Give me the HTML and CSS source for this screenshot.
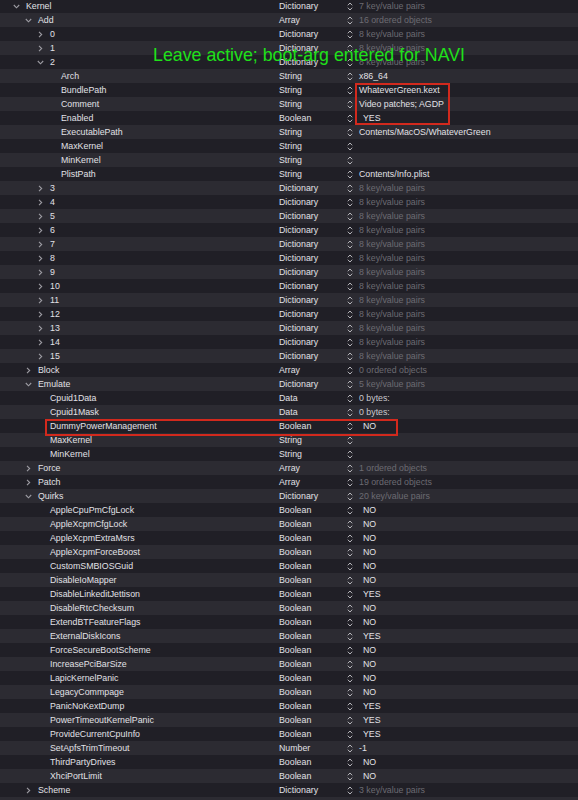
FILE: index.html
```html
<!DOCTYPE html>
<html>
<head>
<meta charset="utf-8">
<link rel="stylesheet" href="styles.css">
</head>
<body>
<div class="wrap">
  <div class="list">
    <div class="r"><div class="k l0"><span class="ch"><svg class="cd" width="7" height="5" viewBox="0 0 7 5"><path d="M0.8 1 L3.5 3.8 L6.2 1"/></svg></span>Kernel</div><div class="t">Dictionary</div><div class="s"><svg width="6" height="9" viewBox="0 0 6 9"><path d="M0.8 3.3 L3 1 L5.2 3.3 M0.8 5.7 L3 8 L5.2 5.7"/></svg></div><div class="v g">7 key/value pairs</div></div>
    <div class="r"><div class="k l1"><span class="ch"><svg class="cd" width="7" height="5" viewBox="0 0 7 5"><path d="M0.8 1 L3.5 3.8 L6.2 1"/></svg></span>Add</div><div class="t">Array</div><div class="s"><svg width="6" height="9" viewBox="0 0 6 9"><path d="M0.8 3.3 L3 1 L5.2 3.3 M0.8 5.7 L3 8 L5.2 5.7"/></svg></div><div class="v g">16 ordered objects</div></div>
    <div class="r"><div class="k l2"><span class="ch"><svg class="cr" width="7" height="7" viewBox="0 0 7 7"><path d="M2 0.8 L4.7 3.5 L2 6.2"/></svg></span>0</div><div class="t">Dictionary</div><div class="s"><svg width="6" height="9" viewBox="0 0 6 9"><path d="M0.8 3.3 L3 1 L5.2 3.3 M0.8 5.7 L3 8 L5.2 5.7"/></svg></div><div class="v g">8 key/value pairs</div></div>
    <div class="r"><div class="k l2"><span class="ch"><svg class="cr" width="7" height="7" viewBox="0 0 7 7"><path d="M2 0.8 L4.7 3.5 L2 6.2"/></svg></span>1</div><div class="t">Dictionary</div><div class="s"><svg width="6" height="9" viewBox="0 0 6 9"><path d="M0.8 3.3 L3 1 L5.2 3.3 M0.8 5.7 L3 8 L5.2 5.7"/></svg></div><div class="v g">8 key/value pairs</div></div>
    <div class="r"><div class="k l2"><span class="ch"><svg class="cd" width="7" height="5" viewBox="0 0 7 5"><path d="M0.8 1 L3.5 3.8 L6.2 1"/></svg></span>2</div><div class="t">Dictionary</div><div class="s"><svg width="6" height="9" viewBox="0 0 6 9"><path d="M0.8 3.3 L3 1 L5.2 3.3 M0.8 5.7 L3 8 L5.2 5.7"/></svg></div><div class="v g">8 key/value pairs</div></div>
    <div class="r"><div class="k l3">Arch</div><div class="t">String</div><div class="s"><svg width="6" height="9" viewBox="0 0 6 9"><path d="M0.8 3.3 L3 1 L5.2 3.3 M0.8 5.7 L3 8 L5.2 5.7"/></svg></div><div class="v">x86_64</div></div>
    <div class="r"><div class="k l3">BundlePath</div><div class="t">String</div><div class="s"><svg width="6" height="9" viewBox="0 0 6 9"><path d="M0.8 3.3 L3 1 L5.2 3.3 M0.8 5.7 L3 8 L5.2 5.7"/></svg></div><div class="v">WhateverGreen.kext</div></div>
    <div class="r"><div class="k l3">Comment</div><div class="t">String</div><div class="s"><svg width="6" height="9" viewBox="0 0 6 9"><path d="M0.8 3.3 L3 1 L5.2 3.3 M0.8 5.7 L3 8 L5.2 5.7"/></svg></div><div class="v">Video patches; AGDP</div></div>
    <div class="r"><div class="k l3">Enabled</div><div class="t">Boolean</div><div class="s"><svg width="6" height="9" viewBox="0 0 6 9"><path d="M0.8 3.3 L3 1 L5.2 3.3 M0.8 5.7 L3 8 L5.2 5.7"/></svg></div><div class="v b">YES</div></div>
    <div class="r"><div class="k l3">ExecutablePath</div><div class="t">String</div><div class="s"><svg width="6" height="9" viewBox="0 0 6 9"><path d="M0.8 3.3 L3 1 L5.2 3.3 M0.8 5.7 L3 8 L5.2 5.7"/></svg></div><div class="v">Contents/MacOS/WhateverGreen</div></div>
    <div class="r"><div class="k l3">MaxKernel</div><div class="t">String</div><div class="s"><svg width="6" height="9" viewBox="0 0 6 9"><path d="M0.8 3.3 L3 1 L5.2 3.3 M0.8 5.7 L3 8 L5.2 5.7"/></svg></div><div class="v"></div></div>
    <div class="r"><div class="k l3">MinKernel</div><div class="t">String</div><div class="s"><svg width="6" height="9" viewBox="0 0 6 9"><path d="M0.8 3.3 L3 1 L5.2 3.3 M0.8 5.7 L3 8 L5.2 5.7"/></svg></div><div class="v"></div></div>
    <div class="r"><div class="k l3">PlistPath</div><div class="t">String</div><div class="s"><svg width="6" height="9" viewBox="0 0 6 9"><path d="M0.8 3.3 L3 1 L5.2 3.3 M0.8 5.7 L3 8 L5.2 5.7"/></svg></div><div class="v">Contents/Info.plist</div></div>
    <div class="r"><div class="k l2"><span class="ch"><svg class="cr" width="7" height="7" viewBox="0 0 7 7"><path d="M2 0.8 L4.7 3.5 L2 6.2"/></svg></span>3</div><div class="t">Dictionary</div><div class="s"><svg width="6" height="9" viewBox="0 0 6 9"><path d="M0.8 3.3 L3 1 L5.2 3.3 M0.8 5.7 L3 8 L5.2 5.7"/></svg></div><div class="v g">8 key/value pairs</div></div>
    <div class="r"><div class="k l2"><span class="ch"><svg class="cr" width="7" height="7" viewBox="0 0 7 7"><path d="M2 0.8 L4.7 3.5 L2 6.2"/></svg></span>4</div><div class="t">Dictionary</div><div class="s"><svg width="6" height="9" viewBox="0 0 6 9"><path d="M0.8 3.3 L3 1 L5.2 3.3 M0.8 5.7 L3 8 L5.2 5.7"/></svg></div><div class="v g">8 key/value pairs</div></div>
    <div class="r"><div class="k l2"><span class="ch"><svg class="cr" width="7" height="7" viewBox="0 0 7 7"><path d="M2 0.8 L4.7 3.5 L2 6.2"/></svg></span>5</div><div class="t">Dictionary</div><div class="s"><svg width="6" height="9" viewBox="0 0 6 9"><path d="M0.8 3.3 L3 1 L5.2 3.3 M0.8 5.7 L3 8 L5.2 5.7"/></svg></div><div class="v g">8 key/value pairs</div></div>
    <div class="r"><div class="k l2"><span class="ch"><svg class="cr" width="7" height="7" viewBox="0 0 7 7"><path d="M2 0.8 L4.7 3.5 L2 6.2"/></svg></span>6</div><div class="t">Dictionary</div><div class="s"><svg width="6" height="9" viewBox="0 0 6 9"><path d="M0.8 3.3 L3 1 L5.2 3.3 M0.8 5.7 L3 8 L5.2 5.7"/></svg></div><div class="v g">8 key/value pairs</div></div>
    <div class="r"><div class="k l2"><span class="ch"><svg class="cr" width="7" height="7" viewBox="0 0 7 7"><path d="M2 0.8 L4.7 3.5 L2 6.2"/></svg></span>7</div><div class="t">Dictionary</div><div class="s"><svg width="6" height="9" viewBox="0 0 6 9"><path d="M0.8 3.3 L3 1 L5.2 3.3 M0.8 5.7 L3 8 L5.2 5.7"/></svg></div><div class="v g">8 key/value pairs</div></div>
    <div class="r"><div class="k l2"><span class="ch"><svg class="cr" width="7" height="7" viewBox="0 0 7 7"><path d="M2 0.8 L4.7 3.5 L2 6.2"/></svg></span>8</div><div class="t">Dictionary</div><div class="s"><svg width="6" height="9" viewBox="0 0 6 9"><path d="M0.8 3.3 L3 1 L5.2 3.3 M0.8 5.7 L3 8 L5.2 5.7"/></svg></div><div class="v g">8 key/value pairs</div></div>
    <div class="r"><div class="k l2"><span class="ch"><svg class="cr" width="7" height="7" viewBox="0 0 7 7"><path d="M2 0.8 L4.7 3.5 L2 6.2"/></svg></span>9</div><div class="t">Dictionary</div><div class="s"><svg width="6" height="9" viewBox="0 0 6 9"><path d="M0.8 3.3 L3 1 L5.2 3.3 M0.8 5.7 L3 8 L5.2 5.7"/></svg></div><div class="v g">8 key/value pairs</div></div>
    <div class="r"><div class="k l2"><span class="ch"><svg class="cr" width="7" height="7" viewBox="0 0 7 7"><path d="M2 0.8 L4.7 3.5 L2 6.2"/></svg></span>10</div><div class="t">Dictionary</div><div class="s"><svg width="6" height="9" viewBox="0 0 6 9"><path d="M0.8 3.3 L3 1 L5.2 3.3 M0.8 5.7 L3 8 L5.2 5.7"/></svg></div><div class="v g">8 key/value pairs</div></div>
    <div class="r"><div class="k l2"><span class="ch"><svg class="cr" width="7" height="7" viewBox="0 0 7 7"><path d="M2 0.8 L4.7 3.5 L2 6.2"/></svg></span>11</div><div class="t">Dictionary</div><div class="s"><svg width="6" height="9" viewBox="0 0 6 9"><path d="M0.8 3.3 L3 1 L5.2 3.3 M0.8 5.7 L3 8 L5.2 5.7"/></svg></div><div class="v g">8 key/value pairs</div></div>
    <div class="r"><div class="k l2"><span class="ch"><svg class="cr" width="7" height="7" viewBox="0 0 7 7"><path d="M2 0.8 L4.7 3.5 L2 6.2"/></svg></span>12</div><div class="t">Dictionary</div><div class="s"><svg width="6" height="9" viewBox="0 0 6 9"><path d="M0.8 3.3 L3 1 L5.2 3.3 M0.8 5.7 L3 8 L5.2 5.7"/></svg></div><div class="v g">8 key/value pairs</div></div>
    <div class="r"><div class="k l2"><span class="ch"><svg class="cr" width="7" height="7" viewBox="0 0 7 7"><path d="M2 0.8 L4.7 3.5 L2 6.2"/></svg></span>13</div><div class="t">Dictionary</div><div class="s"><svg width="6" height="9" viewBox="0 0 6 9"><path d="M0.8 3.3 L3 1 L5.2 3.3 M0.8 5.7 L3 8 L5.2 5.7"/></svg></div><div class="v g">8 key/value pairs</div></div>
    <div class="r"><div class="k l2"><span class="ch"><svg class="cr" width="7" height="7" viewBox="0 0 7 7"><path d="M2 0.8 L4.7 3.5 L2 6.2"/></svg></span>14</div><div class="t">Dictionary</div><div class="s"><svg width="6" height="9" viewBox="0 0 6 9"><path d="M0.8 3.3 L3 1 L5.2 3.3 M0.8 5.7 L3 8 L5.2 5.7"/></svg></div><div class="v g">8 key/value pairs</div></div>
    <div class="r"><div class="k l2"><span class="ch"><svg class="cr" width="7" height="7" viewBox="0 0 7 7"><path d="M2 0.8 L4.7 3.5 L2 6.2"/></svg></span>15</div><div class="t">Dictionary</div><div class="s"><svg width="6" height="9" viewBox="0 0 6 9"><path d="M0.8 3.3 L3 1 L5.2 3.3 M0.8 5.7 L3 8 L5.2 5.7"/></svg></div><div class="v g">8 key/value pairs</div></div>
    <div class="r"><div class="k l1"><span class="ch"><svg class="cr" width="7" height="7" viewBox="0 0 7 7"><path d="M2 0.8 L4.7 3.5 L2 6.2"/></svg></span>Block</div><div class="t">Array</div><div class="s"><svg width="6" height="9" viewBox="0 0 6 9"><path d="M0.8 3.3 L3 1 L5.2 3.3 M0.8 5.7 L3 8 L5.2 5.7"/></svg></div><div class="v g">0 ordered objects</div></div>
    <div class="r"><div class="k l1"><span class="ch"><svg class="cd" width="7" height="5" viewBox="0 0 7 5"><path d="M0.8 1 L3.5 3.8 L6.2 1"/></svg></span>Emulate</div><div class="t">Dictionary</div><div class="s"><svg width="6" height="9" viewBox="0 0 6 9"><path d="M0.8 3.3 L3 1 L5.2 3.3 M0.8 5.7 L3 8 L5.2 5.7"/></svg></div><div class="v g">5 key/value pairs</div></div>
    <div class="r"><div class="k l2n">Cpuid1Data</div><div class="t">Data</div><div class="s"><svg width="6" height="9" viewBox="0 0 6 9"><path d="M0.8 3.3 L3 1 L5.2 3.3 M0.8 5.7 L3 8 L5.2 5.7"/></svg></div><div class="v d">0 bytes:</div></div>
    <div class="r"><div class="k l2n">Cpuid1Mask</div><div class="t">Data</div><div class="s"><svg width="6" height="9" viewBox="0 0 6 9"><path d="M0.8 3.3 L3 1 L5.2 3.3 M0.8 5.7 L3 8 L5.2 5.7"/></svg></div><div class="v d">0 bytes:</div></div>
    <div class="r"><div class="k l2n">DummyPowerManagement</div><div class="t">Boolean</div><div class="s"><svg width="6" height="9" viewBox="0 0 6 9"><path d="M0.8 3.3 L3 1 L5.2 3.3 M0.8 5.7 L3 8 L5.2 5.7"/></svg></div><div class="v b">NO</div></div>
    <div class="r"><div class="k l2n">MaxKernel</div><div class="t">String</div><div class="s"><svg width="6" height="9" viewBox="0 0 6 9"><path d="M0.8 3.3 L3 1 L5.2 3.3 M0.8 5.7 L3 8 L5.2 5.7"/></svg></div><div class="v"></div></div>
    <div class="r"><div class="k l2n">MinKernel</div><div class="t">String</div><div class="s"><svg width="6" height="9" viewBox="0 0 6 9"><path d="M0.8 3.3 L3 1 L5.2 3.3 M0.8 5.7 L3 8 L5.2 5.7"/></svg></div><div class="v"></div></div>
    <div class="r"><div class="k l1"><span class="ch"><svg class="cr" width="7" height="7" viewBox="0 0 7 7"><path d="M2 0.8 L4.7 3.5 L2 6.2"/></svg></span>Force</div><div class="t">Array</div><div class="s"><svg width="6" height="9" viewBox="0 0 6 9"><path d="M0.8 3.3 L3 1 L5.2 3.3 M0.8 5.7 L3 8 L5.2 5.7"/></svg></div><div class="v g">1 ordered objects</div></div>
    <div class="r"><div class="k l1"><span class="ch"><svg class="cr" width="7" height="7" viewBox="0 0 7 7"><path d="M2 0.8 L4.7 3.5 L2 6.2"/></svg></span>Patch</div><div class="t">Array</div><div class="s"><svg width="6" height="9" viewBox="0 0 6 9"><path d="M0.8 3.3 L3 1 L5.2 3.3 M0.8 5.7 L3 8 L5.2 5.7"/></svg></div><div class="v g">19 ordered objects</div></div>
    <div class="r"><div class="k l1"><span class="ch"><svg class="cd" width="7" height="5" viewBox="0 0 7 5"><path d="M0.8 1 L3.5 3.8 L6.2 1"/></svg></span>Quirks</div><div class="t">Dictionary</div><div class="s"><svg width="6" height="9" viewBox="0 0 6 9"><path d="M0.8 3.3 L3 1 L5.2 3.3 M0.8 5.7 L3 8 L5.2 5.7"/></svg></div><div class="v g">20 key/value pairs</div></div>
    <div class="r"><div class="k l2n">AppleCpuPmCfgLock</div><div class="t">Boolean</div><div class="s"><svg width="6" height="9" viewBox="0 0 6 9"><path d="M0.8 3.3 L3 1 L5.2 3.3 M0.8 5.7 L3 8 L5.2 5.7"/></svg></div><div class="v b">NO</div></div>
    <div class="r"><div class="k l2n">AppleXcpmCfgLock</div><div class="t">Boolean</div><div class="s"><svg width="6" height="9" viewBox="0 0 6 9"><path d="M0.8 3.3 L3 1 L5.2 3.3 M0.8 5.7 L3 8 L5.2 5.7"/></svg></div><div class="v b">NO</div></div>
    <div class="r"><div class="k l2n">AppleXcpmExtraMsrs</div><div class="t">Boolean</div><div class="s"><svg width="6" height="9" viewBox="0 0 6 9"><path d="M0.8 3.3 L3 1 L5.2 3.3 M0.8 5.7 L3 8 L5.2 5.7"/></svg></div><div class="v b">NO</div></div>
    <div class="r"><div class="k l2n">AppleXcpmForceBoost</div><div class="t">Boolean</div><div class="s"><svg width="6" height="9" viewBox="0 0 6 9"><path d="M0.8 3.3 L3 1 L5.2 3.3 M0.8 5.7 L3 8 L5.2 5.7"/></svg></div><div class="v b">NO</div></div>
    <div class="r"><div class="k l2n">CustomSMBIOSGuid</div><div class="t">Boolean</div><div class="s"><svg width="6" height="9" viewBox="0 0 6 9"><path d="M0.8 3.3 L3 1 L5.2 3.3 M0.8 5.7 L3 8 L5.2 5.7"/></svg></div><div class="v b">NO</div></div>
    <div class="r"><div class="k l2n">DisableIoMapper</div><div class="t">Boolean</div><div class="s"><svg width="6" height="9" viewBox="0 0 6 9"><path d="M0.8 3.3 L3 1 L5.2 3.3 M0.8 5.7 L3 8 L5.2 5.7"/></svg></div><div class="v b">NO</div></div>
    <div class="r"><div class="k l2n">DisableLinkeditJettison</div><div class="t">Boolean</div><div class="s"><svg width="6" height="9" viewBox="0 0 6 9"><path d="M0.8 3.3 L3 1 L5.2 3.3 M0.8 5.7 L3 8 L5.2 5.7"/></svg></div><div class="v b">YES</div></div>
    <div class="r"><div class="k l2n">DisableRtcChecksum</div><div class="t">Boolean</div><div class="s"><svg width="6" height="9" viewBox="0 0 6 9"><path d="M0.8 3.3 L3 1 L5.2 3.3 M0.8 5.7 L3 8 L5.2 5.7"/></svg></div><div class="v b">NO</div></div>
    <div class="r"><div class="k l2n">ExtendBTFeatureFlags</div><div class="t">Boolean</div><div class="s"><svg width="6" height="9" viewBox="0 0 6 9"><path d="M0.8 3.3 L3 1 L5.2 3.3 M0.8 5.7 L3 8 L5.2 5.7"/></svg></div><div class="v b">NO</div></div>
    <div class="r"><div class="k l2n">ExternalDiskIcons</div><div class="t">Boolean</div><div class="s"><svg width="6" height="9" viewBox="0 0 6 9"><path d="M0.8 3.3 L3 1 L5.2 3.3 M0.8 5.7 L3 8 L5.2 5.7"/></svg></div><div class="v b">YES</div></div>
    <div class="r"><div class="k l2n">ForceSecureBootScheme</div><div class="t">Boolean</div><div class="s"><svg width="6" height="9" viewBox="0 0 6 9"><path d="M0.8 3.3 L3 1 L5.2 3.3 M0.8 5.7 L3 8 L5.2 5.7"/></svg></div><div class="v b">NO</div></div>
    <div class="r"><div class="k l2n">IncreasePciBarSize</div><div class="t">Boolean</div><div class="s"><svg width="6" height="9" viewBox="0 0 6 9"><path d="M0.8 3.3 L3 1 L5.2 3.3 M0.8 5.7 L3 8 L5.2 5.7"/></svg></div><div class="v b">NO</div></div>
    <div class="r"><div class="k l2n">LapicKernelPanic</div><div class="t">Boolean</div><div class="s"><svg width="6" height="9" viewBox="0 0 6 9"><path d="M0.8 3.3 L3 1 L5.2 3.3 M0.8 5.7 L3 8 L5.2 5.7"/></svg></div><div class="v b">NO</div></div>
    <div class="r"><div class="k l2n">LegacyCommpage</div><div class="t">Boolean</div><div class="s"><svg width="6" height="9" viewBox="0 0 6 9"><path d="M0.8 3.3 L3 1 L5.2 3.3 M0.8 5.7 L3 8 L5.2 5.7"/></svg></div><div class="v b">NO</div></div>
    <div class="r"><div class="k l2n">PanicNoKextDump</div><div class="t">Boolean</div><div class="s"><svg width="6" height="9" viewBox="0 0 6 9"><path d="M0.8 3.3 L3 1 L5.2 3.3 M0.8 5.7 L3 8 L5.2 5.7"/></svg></div><div class="v b">YES</div></div>
    <div class="r"><div class="k l2n">PowerTimeoutKernelPanic</div><div class="t">Boolean</div><div class="s"><svg width="6" height="9" viewBox="0 0 6 9"><path d="M0.8 3.3 L3 1 L5.2 3.3 M0.8 5.7 L3 8 L5.2 5.7"/></svg></div><div class="v b">YES</div></div>
    <div class="r"><div class="k l2n">ProvideCurrentCpuInfo</div><div class="t">Boolean</div><div class="s"><svg width="6" height="9" viewBox="0 0 6 9"><path d="M0.8 3.3 L3 1 L5.2 3.3 M0.8 5.7 L3 8 L5.2 5.7"/></svg></div><div class="v b">YES</div></div>
    <div class="r"><div class="k l2n">SetApfsTrimTimeout</div><div class="t">Number</div><div class="s"><svg width="6" height="9" viewBox="0 0 6 9"><path d="M0.8 3.3 L3 1 L5.2 3.3 M0.8 5.7 L3 8 L5.2 5.7"/></svg></div><div class="v">-1</div></div>
    <div class="r"><div class="k l2n">ThirdPartyDrives</div><div class="t">Boolean</div><div class="s"><svg width="6" height="9" viewBox="0 0 6 9"><path d="M0.8 3.3 L3 1 L5.2 3.3 M0.8 5.7 L3 8 L5.2 5.7"/></svg></div><div class="v b">NO</div></div>
    <div class="r"><div class="k l2n">XhciPortLimit</div><div class="t">Boolean</div><div class="s"><svg width="6" height="9" viewBox="0 0 6 9"><path d="M0.8 3.3 L3 1 L5.2 3.3 M0.8 5.7 L3 8 L5.2 5.7"/></svg></div><div class="v b">NO</div></div>
    <div class="r"><div class="k l1"><span class="ch"><svg class="cr" width="7" height="7" viewBox="0 0 7 7"><path d="M2 0.8 L4.7 3.5 L2 6.2"/></svg></span>Scheme</div><div class="t">Dictionary</div><div class="s"><svg width="6" height="9" viewBox="0 0 6 9"><path d="M0.8 3.3 L3 1 L5.2 3.3 M0.8 5.7 L3 8 L5.2 5.7"/></svg></div><div class="v g">3 key/value pairs</div></div>
    <div class="r"><div class="k l0"></div><div class="t"></div><div class="s"></div><div class="v"></div></div>
  </div>
  <div class="note">Leave active; boot-arg entered for NAVI</div>
  <div class="box box1"></div>
  <div class="box box2"></div>
</div>
</body>
</html>
```

FILE: styles.css
```css
html, body {
  margin: 0;
  padding: 0;
  background: #201f26;
  overflow: hidden;
}
.wrap {
  position: relative;
  width: 578px;
  height: 800px;
  overflow: hidden;
  font-family: "Liberation Sans", Arial, sans-serif;
}
.list {
  margin-top: -1px;
  display: flex;
  flex-direction: column;
}
.r {
  display: flex;
  align-items: center;
  height: 14px;
  font-size: 8.8px;
  line-height: 14px;
  color: #e2e1e6;
  white-space: nowrap;
}
.r:nth-child(odd) { background: #201f26; }
.r:nth-child(even) { background: #2c2b32; }
.k {
  width: 279px;
  flex: none;
  display: flex;
  align-items: center;
  box-sizing: border-box;
  height: 14px;
}
.l0 { padding-left: 13px; }
.l1 { padding-left: 25px; }
.l2 { padding-left: 37px; }
.l2n { padding-left: 50px; }
.l3 { padding-left: 61px; }
.ch {
  width: 13px;
  flex: none;
  display: flex;
  align-items: center;
  height: 14px;
}
.ch svg path {
  fill: none;
  stroke: #9d9ca3;
  stroke-width: 1.1;
}
.cd { margin-top: 1px; }
.t {
  width: 67px;
  flex: none;
}
.s {
  width: 13px;
  flex: none;
  display: flex;
  align-items: center;
  height: 14px;
}
.s svg { margin-left: 1px; }
.s svg path {
  fill: none;
  stroke: #b9b8bd;
  stroke-width: 1;
}
.v { flex: 1; }
.v.g { color: #6c6b72; }
.v.d { color: #c9c8cd; }
.v.b { padding-left: 4px; }
.note {
  position: absolute;
  left: 153px;
  top: 47px;
  font-size: 17.8px;
  line-height: 1;
  color: #1fe01a;
  white-space: nowrap;
}
.box {
  position: absolute;
  border: 2px solid #d2291d;
  box-sizing: border-box;
}
.box1 {
  left: 355px;
  top: 83px;
  width: 95px;
  height: 42px;
}
.box2 {
  left: 45px;
  top: 419px;
  width: 353px;
  height: 17px;
}
```
